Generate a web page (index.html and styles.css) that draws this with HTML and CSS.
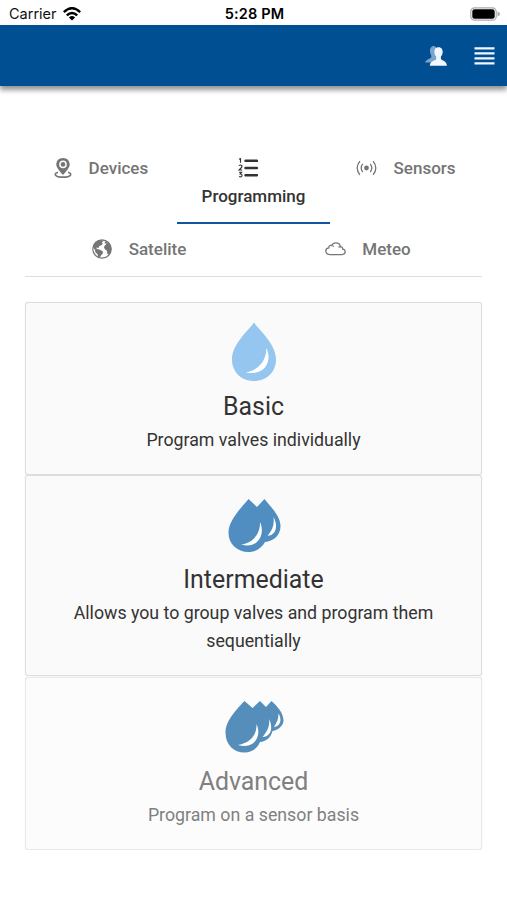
FILE: index.html
```html
<!DOCTYPE html>
<html lang="en">
<head>
<meta charset="utf-8">
<title>Programming</title>
<link rel="stylesheet" href="styles.css">
</head>
<body>
<div class="status">
  <div class="carrier"><span>Carrier</span>
    <svg width="18" height="14" viewBox="0 0 18 14"><g fill="none" stroke="#000" stroke-width="2.5"><path d="M.8 5.100Q9-2.500 17.200 5.100"/><path d="M3.800 8.400Q9 3.500 14.200 8.400"/></g><path d="M5.900 10.500Q9 7.700 12.100 10.500L9 13.600z"/></svg>
  </div>
  <span class="time">5:28 PM</span>
  <svg class="battery" width="30" height="14" viewBox="0 0 30 14"><rect x=".8" y=".8" width="25.400" height="12.400" rx="3.800" fill="#fff" stroke="#aaa" stroke-width="1.200"/><rect x="2.300" y="2.200" width="22.400" height="9.600" rx="2.300"/><path d="M27.500 4.600Q30 5.400 30 7T27.500 9.400z" fill="#aaa"/></svg>
</div>
<header class="topbar">
  <svg width="22" height="20" viewBox="0 0 22 20"><path fill="#7ba4cb" d="M9 0C5.900 0 4.700 2.500 5 5.500c.1 1.800.8 3 1.300 4v1.700C5.700 12.800.4 13.500.2 16.500h6.200L11 13V1z"/><path fill="#f1f7ff" d="M13.500 1.200c-3 0-4.300 2.200-4.100 4.900.1 2.200.8 3.600 1.700 4.500v2.500c-.6 1.700-6.100 1.700-6.300 6.600h17.100c-.2-4.900-5.300-4.900-6-6.600v-2.500c.9-.9 1.700-2.300 1.800-4.500.1-2.700-1.200-4.900-4.200-4.900z"/></svg>
  <svg class="menu" width="21" height="18" viewBox="0 0 21 18"><path d="M.5 1.300h20M.5 6.300h20M.5 11.300h20M.5 16.300h20" stroke="#f1f7ff" stroke-width="2.300"/></svg>
</header>
<main>
  <nav class="tabs">
    <div class="row three">
      <a class="tab"><svg width="18" height="20" viewBox="0 0 18 20"><path fill="#757575" fill-rule="evenodd" d="M9 0C5 0 2.300 2.800 2.300 6.500c0 3.300 3.800 7.100 6.700 10.500 2.900-3.400 6.700-7.200 6.700-10.500C15.700 2.800 13 0 9 0zm0 2.600a3.800 3.800 0 1 1 0 7.600 3.800 3.800 0 0 1 0-7.600z"/><circle cx="9" cy="6.400" r="2.300" fill="#757575"/><path d="M4 14.200C-.8 15.500.8 19.100 9 19.100s9.800-3.600 5-4.900" fill="none" stroke="#757575" stroke-width="1.600"/></svg><span>Devices</span></a>
      <a class="tab active"><svg width="20" height="20" viewBox="0 0 20 20"><path d="M7.500 2.800H19M7.500 10H19M7.500 17.200H19" stroke="#333" stroke-width="2.500" stroke-linecap="round"/><path d="M1 1.200 2.500.6v4.200M.9 7.700q1.500-1.300 2.700-.2 1 1-.6 2.500L1.100 12h3M1 14.200h2.700l-1.500 1.800q2 0 1.800 1.700-.5 1.800-3 .9" fill="none" stroke="#333" stroke-width="1.100"/></svg><span>Programming</span></a>
      <a class="tab"><svg width="21" height="16" viewBox="0 0 21 16"><circle cx="10.500" cy="8" r="2.400" fill="#757575"/><path d="M6.800 3.900Q3.600 8 6.800 12.100M14.200 3.900q3.200 4.100 0 8.200M3.900 1.200Q-1.500 8 3.900 14.800M17.100 1.200q5.400 6.800 0 13.600" fill="none" stroke="#757575" stroke-width="1.300"/></svg><span>Sensors</span></a>
    </div>
    <div class="row two">
      <a class="tab"><svg width="20" height="20" viewBox="0 0 20 20"><circle cx="10" cy="10" r="9.200" fill="#fff" stroke="#757575" stroke-width="1.200"/><path fill="#757575" d="M2.200 5.300 5.400 1.800 9.300.9l2.600 1-2 1 .9 1.800-1.700 1.700-1.800.6-.8 2.100-2.200-.6.500 1.500 2.400.6 3.300 1.400.5 2.200-2 2.300-1.600 2.400-1.200-.3-.6-3.400-2.300-2-.2-2.100L1 8.200zM13 2.200l3.600 1.700 2.600 4.400-.1 4.200-2.100 3.300-1.700-1-.4-3.100-2.100-1.400-.9-2.600 1.500-1.700 1.200-1.400-2-.4z"/></svg><span>Satelite</span></a>
      <a class="tab"><svg width="21" height="14" viewBox="0 0 21 14"><path d="M5 12.500C2.200 12.500.8 10.900.8 9.100c0-1.900 1.500-3.100 3.100-3.200C3.600 4 5 3.100 6.600 3.500 7.500 1.700 9 .8 10.700.8c2.700 0 4.400 1.600 4.700 3.900 1.900.1 2.600 1.300 2.200 2.500 1.700.2 2.600 1.200 2.600 2.600 0 1.700-1.300 2.700-3.200 2.700zM6.600 3.500q1.500.2 2 1.300M15.400 4.700q-1.200 0-1.900.7" fill="none" stroke="#757575" stroke-width="1.250"/></svg><span>Meteo</span></a>
    </div>
  </nav>
  <section class="card basic">
    <svg width="60" height="60" viewBox="0 0 60 60"><path fill="#94c6f0" d="M30 .5C24 9 8 22 8 37.500 8 50.500 18 59 30 59s22-8.500 22-21.500C52 22 36 9 30 .5z"/><path fill="#fff" d="M42.300 26C48.500 38 42 54.500 21.500 50.500 34 48.500 42.500 39 42.300 26z"/></svg>
    <h2>Basic</h2><p>Program valves individually</p>
  </section>
  <section class="card mid">
    <svg width="60" height="60" viewBox="0 0 60 60"><path fill="#508dc0" d="M24.500 4C18 12 4.500 25 4.500 37.500 4.500 49 13 57 24.500 57c8 0 13.500-4.500 16.500-10 8-1 15.500-6 15.500-16C56.500 21 46 11 40.500 4L33 12z"/><path fill="#fff" d="M36 27C41.500 39 34.500 54.500 17 49.500 29 48 36.500 39 36 27zM49.500 22C54.500 31 52 40.500 43.500 41 48.500 35 50.500 30 49.500 22z"/></svg>
    <h2>Intermediate</h2><p>Allows you to group valves and program them<br>sequentially</p>
  </section>
  <section class="card advanced">
    <svg width="60" height="60" viewBox="0 0 60 60"><path fill="#558eba" d="M20.500 4C14 11 1.500 23 1.500 35.500 1.500 48 10 55.500 20.500 55.500c7.500 0 13-4.500 15.500-10.500 6-.5 11-4.500 12.500-11C55 33 59.500 28 59.500 23.500 59.500 16 53 9 47.500 4L42 10 36 4l-7.500 7z"/><path fill="#fff" d="M32.500 27C38 38 31 53 14 48 25.500 46 33 39 32.500 27zM45 22C49.500 31 47 39.500 38.500 40 43.500 34 46 29 45 22zM54.500 16.500C58.500 23 56 29.500 50 30 53 25 54.500 22 54.500 16.500z"/></svg>
    <h2>Advanced</h2><p>Program on a sensor basis</p>
  </section>
</main>
</body>
</html>
```

FILE: styles.css
```css
* { box-sizing: border-box; }
body { margin: 0; background: #fff; color: #333; font-family: Roboto, sans-serif; }
svg { display: block; flex: none; }
.status { height: 25px; padding: 2px 7px 0 9px; display: grid; grid-template-columns: 1fr auto 1fr; align-items: center; color: #111; font: 14.5px/20px Inter, sans-serif; }
.carrier { display: flex; align-items: center; gap: 6px; }
.time { font-weight: 600; color: #000; letter-spacing: .15px; }
.battery { justify-self: end; }
.topbar { height: 61px; padding: 0 12px; display: flex; justify-content: flex-end; align-items: center; gap: 27px; background: #004f93; box-shadow: 0 4px 5px rgba(0,0,0,.42); }
main { padding: 54px 25px 0; }
.tabs { height: 137px; margin-bottom: 25px; border-bottom: 1px solid #ddd; }
.row { display: grid; }
.three { height: 84px; grid-template-columns: repeat(3, 1fr); }
.two { height: 52px; grid-template-columns: repeat(2, 1fr); }
.tab { display: flex; justify-content: center; align-items: center; gap: 16.5px; height: 56px; color: #757575; font-size: 17px; font-weight: 500; line-height: 28px; }
.two .tab { height: 50px; }
.active { height: 84px; padding-top: 18px; flex-direction: column; justify-content: flex-start; gap: 4px; color: #333; border-bottom: 2px solid #1256a0; }
.active svg { margin-right: 11px; }
.card { display: flex; flex-direction: column; align-items: center; height: 173px; padding-top: 19px; border: 1px solid #ddd; border-radius: 3px; background: #fafafa; box-shadow: 0 0 1px #ddd; text-align: center; }
.mid { height: 201px; margin-bottom: 1px; }
.advanced { color: #808080; background: #fcfcfc; border-color: #e9e9e9; }
h2 { margin: 8px 0 0; font-size: 24.9px; font-weight: 400; line-height: 34px; }
p { margin: 2px 0 0; font-size: 17.75px; line-height: 28px; }
```
